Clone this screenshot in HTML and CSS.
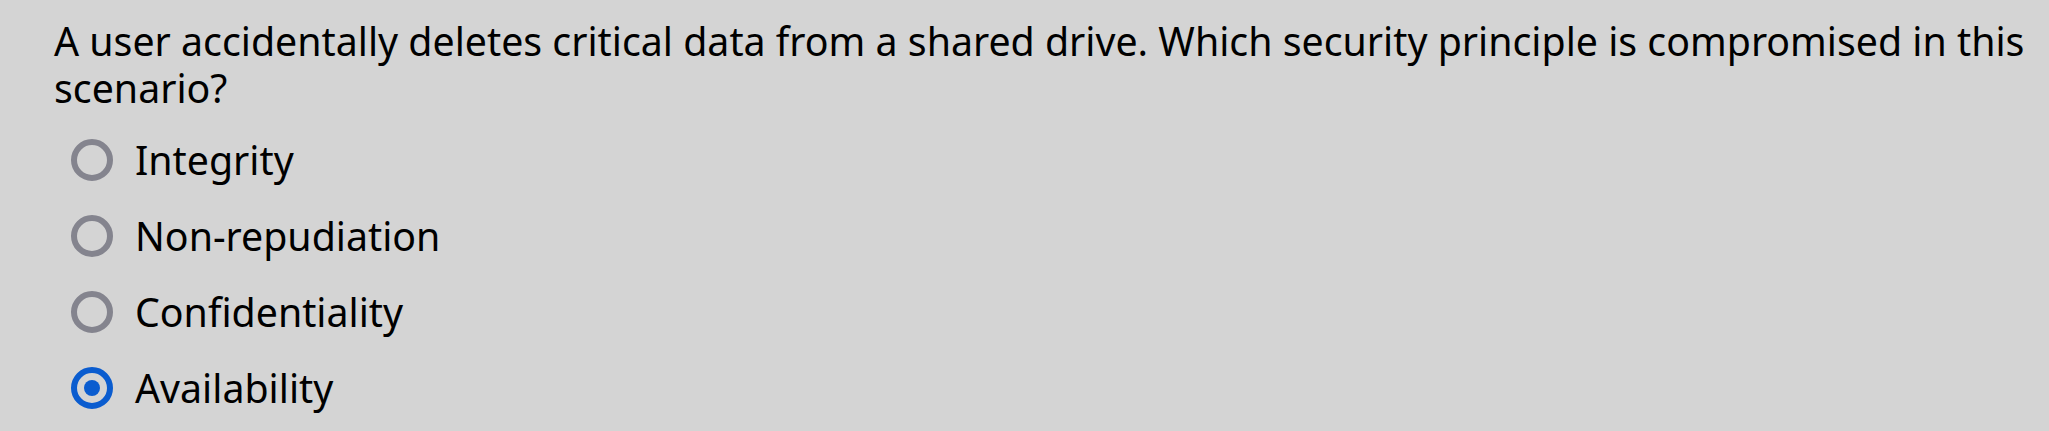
FILE: index.html
```html
<!DOCTYPE html>
<html>
<head>
<meta charset="utf-8">
<link rel="stylesheet" href="styles.css">
</head>
<body>
<div class="quiz">
  <p class="question">A user accidentally deletes critical data from a shared drive. Which security principle is compromised in this scenario?</p>
  <div class="options">
    <label class="option"><span class="radio"></span><span class="label">Integrity</span></label>
    <label class="option"><span class="radio"></span><span class="label">Non-repudiation</span></label>
    <label class="option"><span class="radio"></span><span class="label">Confidentiality</span></label>
    <label class="option"><span class="radio checked"></span><span class="label">Availability</span></label>
  </div>
</div>
</body>
</html>
```
FILE: styles.css
```css
html, body {
  margin: 0;
  padding: 0;
  background: #d4d4d4;
}
body {
  font-family: "Noto Sans", "Open Sans", sans-serif;
  color: #000;
  width: 2049px;
  height: 431px;
  overflow: hidden;
}
.quiz {
  padding: 18px 0 0 54px;
}
.question {
  margin: 0;
  font-size: 39.3px;
  line-height: 47px;
  width: 1990px;
}
.options {
  display: flex;
  flex-direction: column;
  margin-top: 10px;
  padding-left: 17px;
}
.option {
  display: flex;
  align-items: center;
  height: 76px;
  gap: 22px;
  font-size: 39.3px;
}
.radio {
  width: 42px;
  height: 42px;
  box-sizing: border-box;
  border: 6px solid #84848e;
  border-radius: 50%;
  display: flex;
  align-items: center;
  justify-content: center;
  flex: none;
}
.radio.checked {
  border-color: #0a5ccf;
}
.radio.checked::after {
  content: "";
  width: 16px;
  height: 16px;
  border-radius: 50%;
  background: #0a5ccf;
}
```
